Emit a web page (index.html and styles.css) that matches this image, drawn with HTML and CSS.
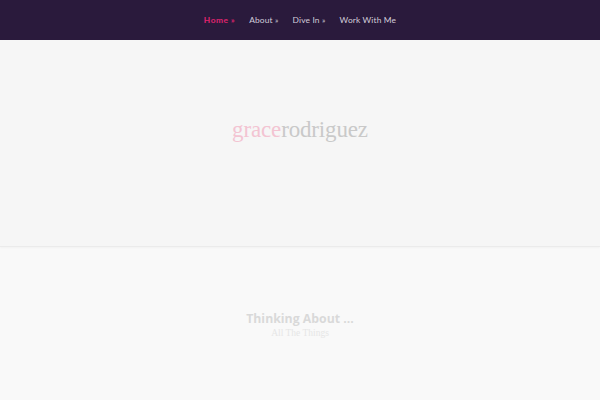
FILE: index.html
```html
<!DOCTYPE html>
<html>
<head>
<meta charset="utf-8">
<link rel="stylesheet" href="styles.css">
</head>
<body>
<nav class="nav">
  <ul class="menu">
    <li class="item active">Home <span class="raq">»</span></li>
    <li class="item">About <span class="raq">»</span></li>
    <li class="item">Dive In <span class="raq">»</span></li>
    <li class="item">Work With Me</li>
  </ul>
</nav>
<header class="hero">
  <h1 class="logo"><span class="first">grace</span><span class="last">rodriguez</span></h1>
</header>
<section class="intro">
  <h2 class="intro-title">Thinking About ...</h2>
  <p class="intro-sub">All The Things</p>
</section>
</body>
</html>
```
FILE: styles.css
```css
* { box-sizing: border-box; }
html, body { margin: 0; padding: 0; }
body {
  width: 600px;
  height: 400px;
  overflow: hidden;
  background: #f9f9f9;
  font-family: "Lato", "Open Sans", sans-serif;
}
.nav {
  height: 40px;
  background: #2a1a3c;
  display: flex;
  align-items: center;
  justify-content: center;
}
.menu {
  list-style: none;
  margin: 0;
  padding: 0;
  display: flex;
  gap: 14px;
}
.item {
  font-size: 8.4px;
  color: #d2cdda;
  letter-spacing: 0.15px;
}
.item.active {
  color: #e0246f;
  font-weight: 700;
  letter-spacing: 0.5px;
}
.raq { font-size: 8px; }
.hero {
  height: 207px;
  background: #f6f6f6;
  border-bottom: 1px solid #ebebeb;
  box-shadow: 0 1px 2px rgba(0,0,0,0.03);
  display: flex;
  justify-content: center;
  padding-top: 77px;
}
.logo {
  margin: 0;
  font-family: "Liberation Serif", "DejaVu Serif", serif;
  font-weight: 400;
  font-size: 23px;
  line-height: 26px;
  letter-spacing: -0.15px;
}
.first { color: #f3c4d2; }
.last { color: #c9c9c9; }
.intro {
  text-align: center;
  padding-top: 64px;
}
.intro-title {
  margin: 0;
  font-family: "Open Sans", sans-serif;
  font-weight: 700;
  font-size: 12.3px;
  line-height: 16px;
  color: #d9d9d9;
}
.intro-sub {
  margin: 0;
  font-family: "Liberation Serif", serif;
  font-size: 9.5px;
  line-height: 12px;
  color: #e6e6e6;
}
```
